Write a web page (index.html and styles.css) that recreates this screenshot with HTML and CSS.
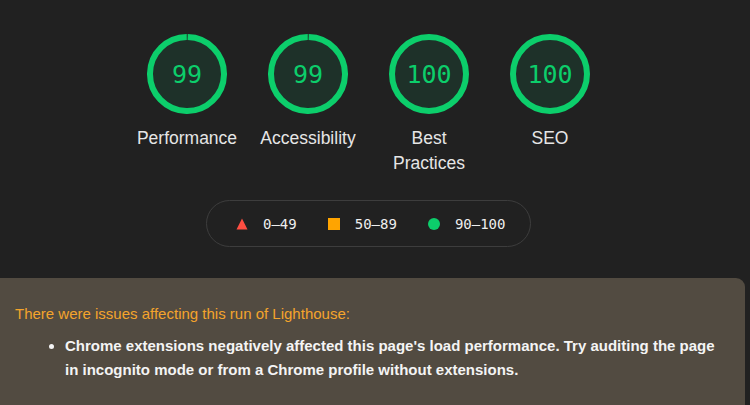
FILE: index.html
```html
<!DOCTYPE html>
<html lang="en">
<head>
<meta charset="utf-8">
<title>Lighthouse</title>
<link rel="stylesheet" href="styles.css">
</head>
<body>
<section class="scores">
  <div class="gauges">
    <div class="gauge">
      <div class="dial">
        <svg viewBox="0 0 80 80" width="80" height="80">
          <circle class="base" cx="40" cy="40" r="37"/>
          <circle class="arc" cx="40" cy="40" r="37" stroke-dasharray="231.2 232.5" transform="rotate(-89 40 40)"/>
        </svg>
        <span class="value">99</span>
      </div>
      <div class="label">Performance</div>
    </div>
    <div class="gauge">
      <div class="dial">
        <svg viewBox="0 0 80 80" width="80" height="80">
          <circle class="base" cx="40" cy="40" r="37"/>
          <circle class="arc" cx="40" cy="40" r="37" stroke-dasharray="231.2 232.5" transform="rotate(-89 40 40)"/>
        </svg>
        <span class="value">99</span>
      </div>
      <div class="label">Accessibility</div>
    </div>
    <div class="gauge">
      <div class="dial">
        <svg viewBox="0 0 80 80" width="80" height="80">
          <circle class="base" cx="40" cy="40" r="37"/>
          <circle class="arc" cx="40" cy="40" r="37"/>
        </svg>
        <span class="value">100</span>
      </div>
      <div class="label">Best Practices</div>
    </div>
    <div class="gauge">
      <div class="dial">
        <svg viewBox="0 0 80 80" width="80" height="80">
          <circle class="base" cx="40" cy="40" r="37"/>
          <circle class="arc" cx="40" cy="40" r="37"/>
        </svg>
        <span class="value">100</span>
      </div>
      <div class="label">SEO</div>
    </div>
  </div>
  <div class="legend">
    <span class="item"><svg class="icon" viewBox="0 0 12 12" width="12" height="12"><polygon points="6,0.5 11.5,11.5 0.5,11.5" fill="#ff4e42"/></svg>0–49</span>
    <span class="item"><span class="square"></span>50–89</span>
    <span class="item"><span class="dot"></span>90–100</span>
  </div>
</section>
<section class="warnings">
  <div class="title">There were issues affecting this run of Lighthouse:</div>
  <ul class="list">
    <li>Chrome extensions negatively affected this page's load performance. Try auditing the page in incognito mode or from a Chrome profile without extensions.</li>
  </ul>
</section>
</body>
</html>
```

FILE: styles.css
```css
html, body {
  margin: 0;
  padding: 0;
}
body {
  background: #212121;
  font-family: "Liberation Sans", Arial, sans-serif;
  color: #e8e8e8;
  overflow: hidden;
  height: 405px;
}
.scores {
  padding: 34px 13px 0 0;
  display: flex;
  flex-direction: column;
  align-items: center;
}
.gauges {
  display: flex;
  justify-content: center;
}
.gauge {
  width: 121px;
  display: flex;
  flex-direction: column;
  align-items: center;
}
.dial {
  display: grid;
  width: 80px;
  height: 80px;
}
.dial svg, .dial .value {
  grid-area: 1 / 1;
}
.dial svg {
  display: block;
}
.base {
  fill: #1e3129;
  stroke: none;
}
.arc {
  fill: none;
  stroke: #0cce6b;
  stroke-width: 6;
}
.value {
  display: flex;
  align-items: center;
  justify-content: center;
  font-family: "DejaVu Sans Mono", monospace;
  font-size: 25px;
  color: #0cce6b;
  padding-top: 1px;
}
.label {
  margin-top: 12px;
  width: 106px;
  text-align: center;
  font-size: 17.5px;
  line-height: 25px;
  color: #e6e6e6;
}
.legend {
  margin-top: 24px;
  box-sizing: border-box;
  width: 325px;
  height: 47px;
  border: 1px solid #3d3d3d;
  border-radius: 24px;
  display: flex;
  align-items: center;
  gap: 31px;
  padding-left: 29px;
  font-family: "DejaVu Sans Mono", monospace;
  font-size: 14px;
  color: #eeeeee;
}
.item {
  display: flex;
  align-items: center;
  gap: 15px;
}
.icon {
  display: block;
}
.square {
  width: 12px;
  height: 12px;
  background: #ffa400;
}
.dot {
  width: 12px;
  height: 12px;
  border-radius: 50%;
  background: #0cce6b;
}
.warnings {
  margin: 31px 5px 0 -10px;
  background: #524b41;
  border-radius: 9px;
  padding: 26px 20px 40px 25px;
}
.title {
  font-size: 15px;
  line-height: 20px;
  color: #f4a42c;
}
.list {
  margin: 10px 0 0;
  padding-left: 50px;
  font-size: 15px;
  font-weight: bold;
  line-height: 24px;
  color: #f4f4f4;
}
```
